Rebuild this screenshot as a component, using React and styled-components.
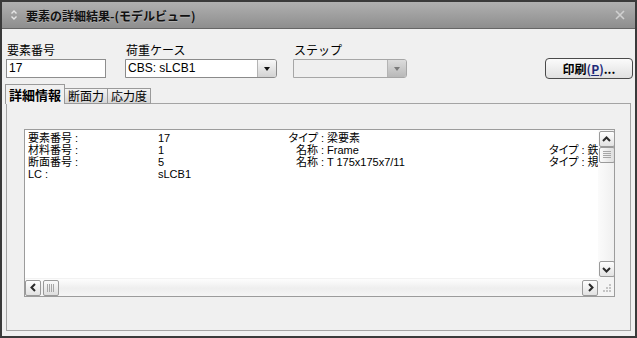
import React from 'react';
import styled, { createGlobalStyle } from 'styled-components';

const GlobalStyle = createGlobalStyle`
  html, body {
    margin: 0;
    padding: 0;
    background: #f0f0f0;
  }
  body {
    font-family: "Liberation Sans", "Noto Sans CJK JP", sans-serif;
    color: #000;
  }
`;

const Window = styled.div`
  width: 637px;
  height: 338px;
  box-sizing: border-box;
  border: 2px solid #3a3a3a;
  display: flex;
  flex-direction: column;
  background: #f0f0f0;
`;

const TitleBar = styled.div`
  height: 26px;
  flex: none;
  display: flex;
  align-items: center;
  padding: 0 10px 0 8px;
  background: linear-gradient(#b0b0b0, #8e8e8e);
  border-bottom: 1px solid #666;
`;

const Title = styled.div`
  margin-left: 8px;
  font-family: "Noto Sans CJK JP", sans-serif;
  font-size: 12px;
  font-weight: bold;
  color: #111;
  text-shadow: 0 1px 0 rgba(255, 255, 255, 0.25);
`;

const CloseBox = styled.div`
  margin-left: auto;
  display: flex;
`;

const Body = styled.div`
  flex: 1;
  display: flex;
  flex-direction: column;
  padding: 13px 4px 5px;
`;

const TopRow = styled.div`
  display: flex;
  align-items: flex-end;
`;

const Field = styled.div`
  display: flex;
  flex-direction: column;
  width: ${(p) => p.w}px;
  margin-left: ${(p) => p.gap || 0}px;
`;

const Label = styled.div`
  font-family: "Noto Sans CJK JP", sans-serif;
  font-size: 12px;
  line-height: 16px;
  height: 16px;
  margin: 0 0 1px 1px;
`;

const TextBox = styled.div`
  height: 19px;
  box-sizing: border-box;
  border: 1px solid #8e8e8e;
  background: #fff;
  font-size: 12px;
  line-height: 17px;
  padding-left: 2px;
`;

const Combo = styled.div`
  height: 19px;
  box-sizing: border-box;
  display: flex;
  border: 1px solid ${(p) => (p.disabled ? '#a6a6a6' : '#8a8a8a')};
  border-radius: 0 3px 3px 0;
  background: ${(p) => (p.disabled ? '#efefef' : '#fff')};
  font-size: 12px;
  line-height: 17px;
`;

const ComboText = styled.div`
  flex: 1;
  padding-left: 2px;
`;

const ComboButton = styled.div`
  width: 18px;
  display: flex;
  align-items: center;
  justify-content: center;
  border-left: 1px solid #b4b4b4;
  border-radius: 0 2px 2px 0;
  background: ${(p) =>
    p.disabled
      ? 'linear-gradient(#dcdcdc, #b8b8b8)'
      : 'linear-gradient(#f8f8f8, #d2d2d2)'};
`;

const Arrow = styled.div`
  width: 0;
  height: 0;
  border-left: 3px solid transparent;
  border-right: 3px solid transparent;
  border-top: 4px solid ${(p) => (p.disabled ? '#7a7a7a' : '#111')};
`;

const PrintButton = styled.div`
  margin-left: auto;
  margin-right: -2px;
  margin-bottom: -1px;
  width: 88px;
  height: 21px;
  box-sizing: border-box;
  border: 1px solid #4a4a4a;
  border-radius: 4px;
  background: linear-gradient(#fbfbfb, #e0e0e0);
  display: flex;
  align-items: center;
  justify-content: center;
  font-family: "Noto Sans CJK JP", sans-serif;
  font-size: 12px;
  font-weight: bold;
`;

const Mnemonic = styled.span`
  color: #1c2a78;
  & u {
    text-decoration-thickness: 1px;
  }
`;

const TabStrip = styled.div`
  display: flex;
  align-items: flex-end;
  height: 19px;
  margin-top: 7px;
  margin-bottom: -1px;
  position: relative;
  z-index: 1;
`;

const Tab = styled.div`
  box-sizing: border-box;
  width: ${(p) => p.w}px;
  height: ${(p) => (p.active ? 20 : 16)}px;
  margin-left: -1px;
  border: 1px solid #9a9a9a;
  border-bottom: ${(p) => (p.active ? 'none' : '1px solid #9a9a9a')};
  background: ${(p) => (p.active ? '#f0f0f0' : 'linear-gradient(#f4f4f4, #d6d6d6)')};
  font-family: "Noto Sans CJK JP", sans-serif;
  font-size: ${(p) => (p.active ? 13 : 12)}px;
  font-weight: ${(p) => (p.active ? 'bold' : 'normal')};
  line-height: ${(p) => (p.active ? 20 : 14)}px;
  text-align: center;
  ${(p) => (p.active ? 'z-index: 2;' : '')}
`;

const Panel = styled.div`
  flex: 1;
  border: 1px solid #a4a4a4;
  padding: 25px 15px 0 17px;
`;

const GridBox = styled.div`
  height: 168px;
  box-sizing: border-box;
  border: 1px solid #9c9c9c;
  background: #fff;
  display: grid;
  grid-template-columns: 1fr 16px;
  grid-template-rows: 148px 18px;
`;

const Content = styled.div`
  overflow: hidden;
  padding: 2px 0 0 3px;
`;

const Row = styled.div`
  display: grid;
  grid-template-columns: 130px 130px 30px 231px auto;
  font-family: "Liberation Sans", "Noto Sans CJK JP", sans-serif;
  font-size: 11px;
  line-height: 12px;
  height: 12px;
  white-space: nowrap;
  font-feature-settings: "palt";
`;

const Cell = styled.span`
  text-align: ${(p) => (p.right ? 'right' : 'left')};
  padding-left: ${(p) => p.indent || 0}px;
`;

const VScroll = styled.div`
  display: flex;
  flex-direction: column;
  align-items: center;
  padding: 1px 0 1px 1px;
  background: linear-gradient(to right, #fbfbfb, #f0f0f0);
`;

const HScroll = styled.div`
  display: flex;
  align-items: center;
  background: linear-gradient(#fdfdfd, #eeeeee 55%, #f6f6f6);
  border-top: 1px solid #f2f2f2;
`;

const Spacer = styled.div`
  flex: 1;
`;

const ScrollButton = styled.div`
  width: 16px;
  height: 16px;
  box-sizing: border-box;
  border: 1px solid #9a9a9a;
  border-radius: 2px;
  background: linear-gradient(#fefefe, #e2e2e2);
  display: flex;
  align-items: center;
  justify-content: center;
  flex: none;
`;

const Thumb = styled(ScrollButton)`
  margin: ${(p) => (p.vertical ? '0' : '0 0 0 2px')};
  background: linear-gradient(${(p) => (p.vertical ? 'to right' : 'to bottom')}, #fafafa, #dedede);
`;

const Corner = styled.div`
  display: flex;
  align-items: center;
  justify-content: center;
  background: #f4f4f4;
`;

const chevrons = {
  up: '1,6 4.5,2.5 8,6',
  down: '1,3 4.5,6.5 8,3',
  left: '6,1 2.5,4.5 6,8',
  right: '3,1 6.5,4.5 3,8',
};

const Chevron = ({ dir }) => (
  <svg width="9" height="9" viewBox="0 0 9 9">
    <polyline points={chevrons[dir]} fill="none" stroke="#2a2a2a" strokeWidth="2" />
  </svg>
);

const Grip = ({ vertical }) => (
  <svg width="8" height="8" viewBox="0 0 8 8">
    {[1, 3, 5, 7].map((v) =>
      vertical ? (
        <line key={v} x1="0" y1={v - 0.5} x2="8" y2={v - 0.5} stroke="#a6a6a6" strokeWidth="1" />
      ) : (
        <line key={v} x1={v - 0.5} y1="0" x2={v - 0.5} y2="8" stroke="#a6a6a6" strokeWidth="1" />
      )
    )}
  </svg>
);

const SizeGrip = () => (
  <svg width="12" height="12" viewBox="0 0 12 12">
    {[
      [9, 3],
      [9, 6],
      [6, 6],
      [9, 9],
      [6, 9],
      [3, 9],
    ].map(([x, y]) => (
      <rect key={`${x}-${y}`} x={x} y={y} width="2" height="2" fill="#c4c4c4" />
    ))}
  </svg>
);

const TitleIcon = () => (
  <svg width="8" height="12" viewBox="0 0 8 12">
    <polyline points="1.5,4.5 4,2 6.5,4.5" fill="none" stroke="#e6e6e6" strokeWidth="1.4" />
    <polyline points="1.5,7.5 4,10 6.5,7.5" fill="none" stroke="#e6e6e6" strokeWidth="1.4" />
  </svg>
);

const CloseIcon = () => (
  <svg width="10" height="10" viewBox="0 0 10 10">
    <path d="M1 1 L9 9 M9 1 L1 9" stroke="#d0d0d0" strokeWidth="1.6" />
  </svg>
);

const rows = [
  ['要素番号 :', '17', 'タイプ', ': 梁要素', ''],
  ['材料番号 :', '1', '名称', ': Frame', 'タイプ : 鉄骨'],
  ['断面番号 :', '5', '名称', ': T 175x175x7/11', 'タイプ : 規格'],
  ['LC :', 'sLCB1', '', '', ''],
];

export default function App() {
  return (
    <>
      <GlobalStyle />
      <Window>
        <TitleBar>
          <TitleIcon />
          <Title>要素の詳細結果-(モデルビュー)</Title>
          <CloseBox>
            <CloseIcon />
          </CloseBox>
        </TitleBar>
        <Body>
          <TopRow>
            <Field w={100}>
              <Label>要素番号</Label>
              <TextBox>17</TextBox>
            </Field>
            <Field w={152} gap={19}>
              <Label>荷重ケース</Label>
              <Combo>
                <ComboText>CBS: sLCB1</ComboText>
                <ComboButton>
                  <Arrow />
                </ComboButton>
              </Combo>
            </Field>
            <Field w={114} gap={16}>
              <Label>ステップ</Label>
              <Combo disabled>
                <ComboText />
                <ComboButton disabled>
                  <Arrow disabled />
                </ComboButton>
              </Combo>
            </Field>
            <PrintButton>
              印刷<Mnemonic>(<u>P</u>)</Mnemonic>...
            </PrintButton>
          </TopRow>
          <TabStrip>
            <Tab active w={60}>
              詳細情報
            </Tab>
            <Tab w={44}>断面力</Tab>
            <Tab w={44}>応力度</Tab>
          </TabStrip>
          <Panel>
            <GridBox>
              <Content>
                {rows.map((r) => (
                  <Row key={r[0]}>
                    <Cell>{r[0]}</Cell>
                    <Cell>{r[1]}</Cell>
                    <Cell right>{r[2]}</Cell>
                    <Cell indent={3}>{r[3]}</Cell>
                    <Cell>{r[4]}</Cell>
                  </Row>
                ))}
              </Content>
              <VScroll>
                <ScrollButton>
                  <Chevron dir="up" />
                </ScrollButton>
                <Thumb vertical>
                  <Grip vertical />
                </Thumb>
                <Spacer />
                <ScrollButton>
                  <Chevron dir="down" />
                </ScrollButton>
              </VScroll>
              <HScroll>
                <ScrollButton>
                  <Chevron dir="left" />
                </ScrollButton>
                <Thumb>
                  <Grip />
                </Thumb>
                <Spacer />
                <ScrollButton>
                  <Chevron dir="right" />
                </ScrollButton>
              </HScroll>
              <Corner>
                <SizeGrip />
              </Corner>
            </GridBox>
          </Panel>
        </Body>
      </Window>
    </>
  );
}
